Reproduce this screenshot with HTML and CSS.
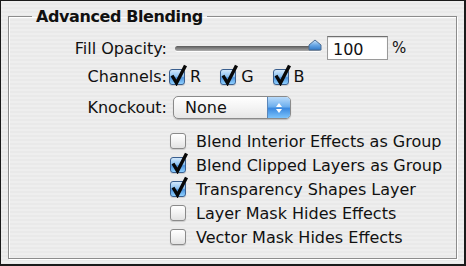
FILE: index.html
```html
<!DOCTYPE html>
<html lang="en">
<head>
    <meta charset="UTF-8">
    <title>Advanced Blending</title>
    <link rel="stylesheet" href="styles.css">
</head>
<body>
    <div class="window">
        <fieldset class="group">
            <legend class="title">Advanced Blending</legend>

            <div class="row opacity-row">
                <span class="label">Fill Opacity:</span>
                <div class="slider">
                    <div class="track"></div>
                    <svg class="thumb" width="14" height="12" viewBox="0 0 14 12">
                        <defs>
                            <linearGradient id="tg" x1="0" y1="0" x2="0" y2="1">
                                <stop offset="0" stop-color="#cfe6fb"/>
                                <stop offset="0.5" stop-color="#6aa8e6"/>
                                <stop offset="1" stop-color="#2f78c9"/>
                            </linearGradient>
                        </defs>
                        <path d="M1 11 L1 6 L7 1 L13 6 L13 11 Z" fill="url(#tg)" stroke="#4a6c94" stroke-width="1"/>
                    </svg>
                </div>
                <div class="number">100</div>
                <span class="unit">%</span>
            </div>

            <div class="row">
                <span class="label">Channels:</span>
                <div class="channels">
                    <span class="check on"></span><span class="chan">R</span>
                    <span class="check on"></span><span class="chan">G</span>
                    <span class="check on"></span><span class="chan">B</span>
                </div>
            </div>

            <div class="row">
                <span class="label">Knockout:</span>
                <div class="select">
                    <span class="select-text">None</span>
                    <span class="select-arrows">
                        <svg width="8" height="12" viewBox="0 0 8 12">
                            <path d="M4 1 L7 5 L1 5 Z" fill="#fff"/>
                            <path d="M4 11 L7 7 L1 7 Z" fill="#fff"/>
                        </svg>
                    </span>
                </div>
            </div>

            <ul class="options">
                <li><span class="check"></span>Blend Interior Effects as Group</li>
                <li><span class="check on"></span>Blend Clipped Layers as Group</li>
                <li><span class="check on"></span>Transparency Shapes Layer</li>
                <li><span class="check"></span>Layer Mask Hides Effects</li>
                <li><span class="check"></span>Vector Mask Hides Effects</li>
            </ul>
        </fieldset>
    </div>
</body>
</html>
```

FILE: styles.css
```css
body {
    margin: 0;
    font-family: "DejaVu Sans", "Liberation Sans", sans-serif;
    color: #111;
}
.window {
    width: 466px;
    height: 266px;
    box-sizing: border-box;
    border: 1px solid #1a1a1a;
    border-width: 1px 2px 2px 1px;
    background: repeating-linear-gradient(to bottom, #eeeeee 0, #eeeeee 2px, #e9e9e9 2px, #e9e9e9 4px);
    padding: 6px 7px 5px 7px;
}
.group {
    margin: 0;
    height: 100%;
    box-sizing: border-box;
    border: 1px solid #8c8c8c;
    box-shadow: inset 1px 1px 0 #fff, 1px 1px 0 #fff;
    padding: 12px 0 0 0;
}
.title {
    font-weight: bold;
    font-size: 16px;
    padding: 0 4px;
    margin-left: 23px;
    letter-spacing: -0.4px;
}
.row {
    display: flex;
    align-items: center;
    height: 31px;
    font-size: 16px;
}
.label {
    width: 158px;
    text-align: right;
    flex-shrink: 0;
}
.opacity-row {
    height: 26px;
    margin-top: -3px;
}
.slider {
    position: relative;
    width: 146px;
    height: 14px;
    margin-left: 8px;
    display: flex;
    align-items: center;
}
.track {
    width: 146px;
    height: 5px;
    border-radius: 3px;
    background: linear-gradient(to bottom, #5a5a5a, #8a8a8a 60%, #b0b0b0);
    box-shadow: 0 1px 0 #fff;
}
.thumb {
    position: absolute;
    right: -1px;
    top: -2px;
}
.number {
    width: 54px;
    height: 22px;
    margin-left: 6px;
    background: #fff;
    border: 1px solid #9a9a9a;
    border-top-color: #6f6f6f;
    box-shadow: inset 0 1px 1px rgba(0, 0, 0, 0.15);
    font-size: 16px;
    line-height: 25px;
    padding-left: 5px;
    box-sizing: content-box;
}
.unit {
    margin-left: 4px;
    font-size: 15px;
}
.channels {
    display: flex;
    align-items: center;
    margin-left: 2px;
}
.chan {
    margin-left: 5px;
    margin-right: 19px;
    font-size: 16px;
}
.check {
    position: relative;
    display: inline-block;
    width: 14px;
    height: 14px;
    border: 1px solid #8a8a8a;
    border-radius: 3px;
    background: linear-gradient(to bottom, #ffffff, #f2f2f2 50%, #e2e2e2);
    box-shadow: 0 1px 1px rgba(0, 0, 0, 0.15);
    flex-shrink: 0;
}
.check.on {
    border-color: #3a5f8f;
    background: linear-gradient(to bottom, #d3e8fb, #8ec2f0 45%, #4f95de 55%, #8fd0ff);
}
.check.on::after {
    content: "";
    position: absolute;
    left: -1px;
    top: -6px;
    width: 19px;
    height: 22px;
    background: url("data:image/svg+xml,%3Csvg xmlns='http://www.w3.org/2000/svg' width='19' height='22' viewBox='0 0 19 22'%3E%3Cpath d='M3 11.5 L7.5 19 L16.5 1.5' fill='none' stroke='%23080808' stroke-width='3.4' stroke-linejoin='miter'/%3E%3C/svg%3E") no-repeat;
}
.select {
    display: flex;
    width: 116px;
    height: 21px;
    margin-left: 6px;
    border: 1px solid #8a8a8a;
    border-radius: 5px;
    overflow: hidden;
    background: linear-gradient(to bottom, #ffffff, #f4f4f4 50%, #e6e6e6);
    box-shadow: 0 1px 1px rgba(0, 0, 0, 0.2);
}
.select-text {
    flex: 1;
    padding-left: 11px;
    font-size: 16px;
    line-height: 21px;
}
.select-arrows {
    width: 22px;
    display: flex;
    align-items: center;
    justify-content: center;
    background: linear-gradient(to bottom, #b9dbfb, #6fb0ee 45%, #3c8ae0 55%, #7cc3fb);
    border-left: 1px solid #5b86b8;
}
.options {
    list-style: none;
    margin: 6px 0 0 161px;
    padding: 0;
    font-size: 16px;
}
.options li {
    display: flex;
    align-items: center;
    height: 24px;
}
.options .check {
    margin-right: 10px;
}
```
